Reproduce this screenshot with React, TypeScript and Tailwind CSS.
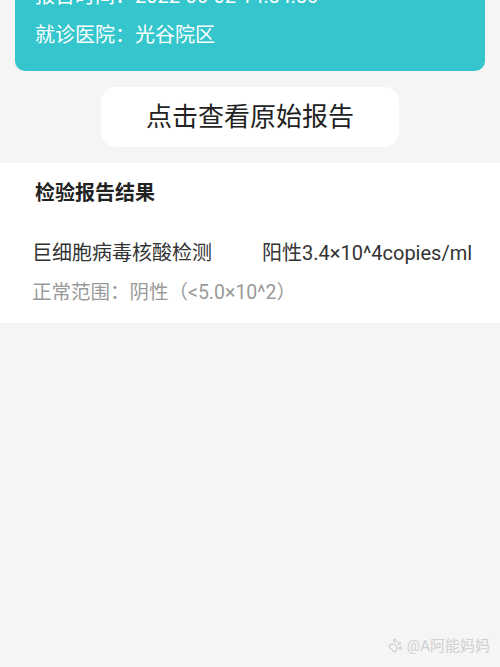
import { PawPrint } from 'lucide-react';

export default function App() {
	return (
		<div
			className="relative h-[667px] w-[500px] overflow-hidden bg-[#f5f5f5]"
			style={{ fontFamily: 'Roboto, "Noto Sans CJK SC", "Noto Sans", sans-serif' }}
		>
			<div className="mx-[15px] -mt-[23px] rounded-b-[10px] bg-[#34c6cc] px-5 pb-4 text-[20px] leading-[39px] text-white">
				<p>报告时间：2022-06-02 14:54:56</p>
				<p>就诊医院：光谷院区</p>
			</div>

			<div className="mx-auto mt-4 flex h-[60px] w-[298px] items-center justify-center rounded-[15px] bg-white text-[26px] text-[#222]">
				点击查看原始报告
			</div>

			<div className="mt-4 h-[160px] bg-white pt-[15px] text-[20px] leading-[30px]">
				<h2 className="pl-[35px] font-bold text-[#222]">检验报告结果</h2>
				<div className="mt-[30px] flex pl-[32px] text-[#333]">
					<span className="w-[230px]">巨细胞病毒核酸检测</span>
					<span>阳性3.4×10^4copies/ml</span>
				</div>
				<p className="mt-[10px] pl-[32px] text-[19.5px] text-[#9a9a9a]">正常范围：阴性（&lt;5.0×10^2）</p>
			</div>

			<div className="absolute bottom-[10px] right-[10px] flex items-center gap-1 text-[15px] text-[#d0d0d0]">
				<PawPrint size={15} />
				<span>@A阿能妈妈</span>
			</div>
		</div>
	);
}
